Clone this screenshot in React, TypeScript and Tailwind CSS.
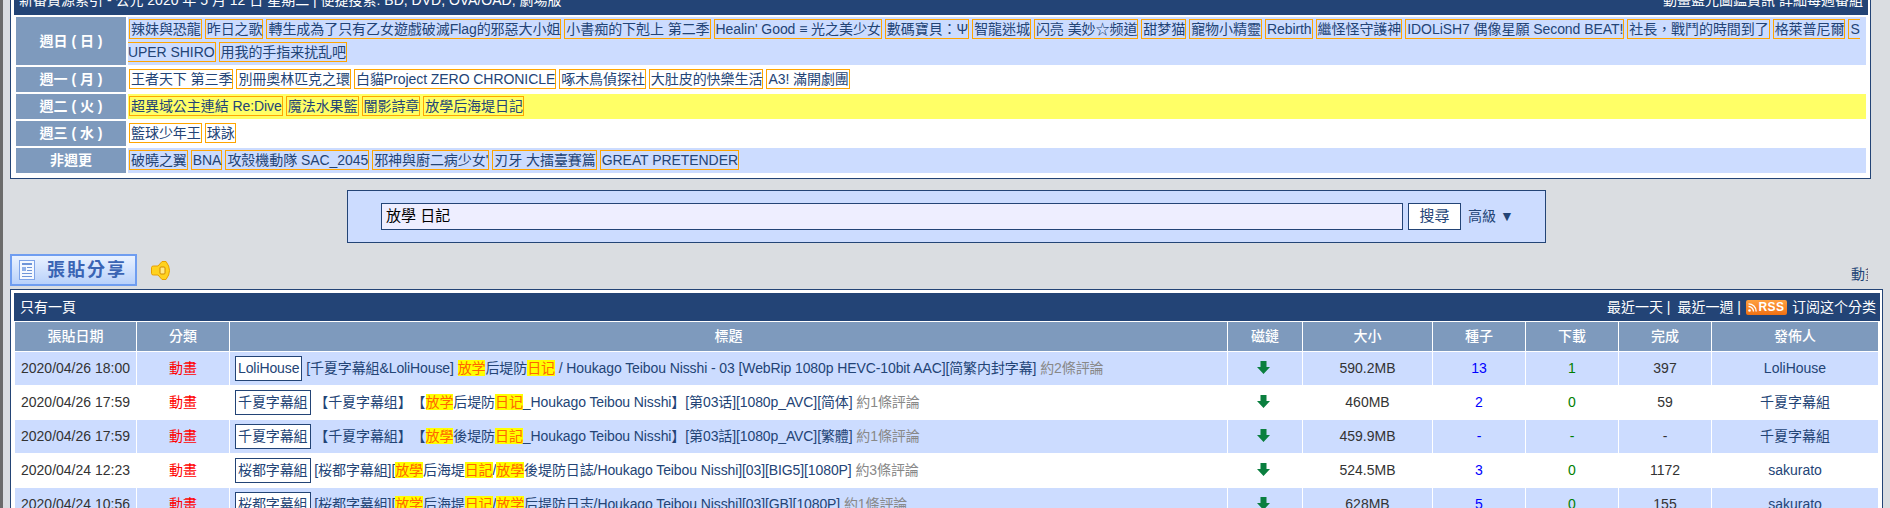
import { Fragment } from "react"

const schedule = [
  {
    day: "週日 ( 日 )",
    bg: "bg-[#ccdcff]",
    tags: ["辣妹與恐龍", "昨日之歌", "轉生成為了只有乙女遊戲破滅Flag的邪惡大小姐", "小書痴的下剋上 第二季", "Healin' Good ≡ 光之美少女", "數碼寶貝：Ψ", "智龍迷城", "闪亮 美妙☆频道", "甜梦猫", "寵物小精靈", "Rebirth", "繼怪怪守護神", "IDOLiSH7 偶像星願 Second BEAT!", "社長，戰鬥的時間到了", "格萊普尼爾", "SUPER SHIRO", "用我的手指来扰乱吧"],
  },
  {
    day: "週一 ( 月 )",
    bg: "bg-white",
    tags: ["王者天下 第三季", "別冊奧林匹克之環", "白貓Project ZERO CHRONICLE", "啄木鳥偵探社", "大肚皮的快樂生活", "A3! 滿開劇團"],
  },
  {
    day: "週二 ( 火 )",
    bg: "bg-[#ffff66]",
    tags: ["超異域公主連結 Re:Dive", "魔法水果籃", "闇影詩章", "放學后海堤日記"],
  },
  {
    day: "週三 ( 水 )",
    bg: "bg-white",
    tags: ["籃球少年王", "球詠"],
  },
  {
    day: "非週更",
    bg: "bg-[#ccdcff]",
    tags: ["破曉之翼", "BNA", "攻殼機動隊 SAC_2045", "邪神與廚二病少女'", "刃牙 大擂臺賽篇", "GREAT PRETENDER"],
  },
]

// *...* marks the highlighted search words
const posts = [
  { date: "2020/04/26 18:00", team: "LoliHouse", title: "[千夏字幕組&LoliHouse] *放学*后堤防*日记* / Houkago Teibou Nisshi - 03 [WebRip 1080p HEVC-10bit AAC][简繁内封字幕]", comments: "約2條評論", size: "590.2MB", seed: "13", dl: "1", done: "397", by: "LoliHouse" },
  { date: "2020/04/26 17:59", team: "千夏字幕組", title: "【千夏字幕组】【*放学*后堤防*日记*_Houkago Teibou Nisshi】[第03话][1080p_AVC][简体]", comments: "約1條評論", size: "460MB", seed: "2", dl: "0", done: "59", by: "千夏字幕組" },
  { date: "2020/04/26 17:59", team: "千夏字幕組", title: "【千夏字幕組】【*放學*後堤防*日記*_Houkago Teibou Nisshi】[第03話][1080p_AVC][繁體]", comments: "約1條評論", size: "459.9MB", seed: "-", dl: "-", done: "-", by: "千夏字幕組" },
  { date: "2020/04/24 12:23", team: "桜都字幕組", title: "[桜都字幕組][*放學*后海堤*日記*/*放學*後堤防日誌/Houkago Teibou Nisshi][03][BIG5][1080P]", comments: "約3條評論", size: "524.5MB", seed: "3", dl: "0", done: "1172", by: "sakurato" },
  { date: "2020/04/24 10:56", team: "桜都字幕組", title: "[桜都字幕組][*放学*后海堤*日记*/*放学*后堤防日志/Houkago Teibou Nisshi][03][GB][1080P]", comments: "約1條評論", size: "628MB", seed: "5", dl: "0", done: "155", by: "sakurato" },
]

const columns = [
  { label: "張貼日期", width: "w-[121px]" },
  { label: "分類", width: "w-[92px]" },
  { label: "標題", width: "w-[997px]" },
  { label: "磁鏈", width: "w-[74px]" },
  { label: "大小", width: "w-[129px]" },
  { label: "種子", width: "w-[92px]" },
  { label: "下載", width: "w-[92px]" },
  { label: "完成", width: "w-[92px]" },
  { label: "發佈人", width: "w-[166px]" },
]

function Title({ text }: { text: string }) {
  return (
    <>
      {text.split("*").map((part, i) =>
        i % 2 === 1 ? (
          <span key={i} className="bg-[#ffff00] text-[#ff6600]">{part}</span>
        ) : (
          <Fragment key={i}>{part}</Fragment>
        )
      )}
    </>
  )
}

function PostIcon() {
  return (
    <svg width="17" height="21" viewBox="0 0 17 21" className="shrink-0">
      <rect x="0.5" y="0.5" width="15" height="19" fill="#f4f8ff" stroke="#7ea4e8" />
      <rect x="3" y="3" width="10" height="2" fill="#6f95d8" />
      <rect x="3" y="7" width="4" height="4" fill="#8fb0e8" />
      <rect x="8" y="7" width="5" height="1" fill="#6f95d8" />
      <rect x="8" y="10" width="5" height="1" fill="#6f95d8" />
      <rect x="3" y="13" width="10" height="1" fill="#6f95d8" />
      <rect x="3" y="16" width="10" height="1" fill="#6f95d8" />
    </svg>
  )
}

function SpeakerIcon() {
  return (
    <svg width="19" height="19" viewBox="0 0 19 19">
      <path d="M0.5 6.5 Q0.5 5 2.5 5 L7 5 L11 0.5 L15 0.5 Q18.5 5 18.5 9.5 Q18.5 14 15 18.5 L11 18.5 L7 14 L2.5 14 Q0.5 14 0.5 12.5 Z" fill="#ffd21f" stroke="#e8a000" />
      <rect x="9" y="6" width="5" height="7" rx="1" fill="#ffe98a" stroke="#d08a00" />
    </svg>
  )
}

function ArrowIcon() {
  return (
    <svg width="13" height="13" viewBox="0 0 13 13" className="block">
      <path d="M3.5 0 H9.5 V6 H13 L6.5 13 L0 6 H3.5 Z" fill="#0a7f3f" />
    </svg>
  )
}

export default function App() {
  return (
    <div className="h-[508px] w-[1890px] overflow-hidden border-l-[3px] border-[#6b6b6b] bg-[#dadde1] font-['Liberation_Sans','Noto_Sans_CJK_TC',sans-serif] text-[14px] text-[#234476]">
      {/* Weekly schedule */}
      <div className="ml-[7px] h-[179px] w-[1861px] border-x border-b border-[#234476] bg-white pb-[3px] pl-[3px] pr-[2px]">
        <div className="flex h-[15px] items-end justify-between overflow-hidden bg-[#234476] px-[5px] pb-[5px] leading-[20px] text-white">
          <span>新番資源索引 - 公元 2020 年 5 月 12 日 星期二 | 便捷搜索: BD, DVD, OVA/OAD, 劇場版</span>
          <span>動畫藍光圖鑑資訊 詳細每週番組</span>
        </div>
        <table className="w-[1854px] table-fixed border-separate border-spacing-[2px]">
          <tbody>
            {schedule.map((row) => (
              <tr key={row.day}>
                <th className="w-[110px] bg-[#7e9abd] text-center font-bold text-white">{row.day}</th>
                <td className={`${row.bg} break-all py-px leading-[23px] tracking-[-0.06px]`}>
                  {row.tags.map((tag) => (
                    <span key={tag} className="ml-px mr-[2px] border border-[#ffa500] pl-px py-px">
                      {tag}
                    </span>
                  ))}
                </td>
              </tr>
            ))}
          </tbody>
        </table>
      </div>

      {/* Search */}
      <div className="mx-auto mt-[11px] flex h-[53px] w-[1199px] items-center border border-[#234476] bg-[#ccdcff] pl-[33px]">
        <div className="flex h-[27px] w-[1022px] items-center border border-[#234476] bg-[#eeeeff] px-[4px] text-[15px] text-black">放學 日記</div>
        <button className="ml-[5px] h-[27px] w-[53px] border border-[#234476] bg-white text-[15px] text-[#234476]">搜尋</button>
        <span className="ml-[7px]">高級 ▼</span>
      </div>

      {/* Post button row */}
      <div className="mt-[11px] flex h-[32px] items-center pl-[7px]">
        <div className="flex h-[32px] w-[127px] items-center gap-[11px] border-2 border-[#6f9df0] bg-gradient-to-b from-[#eaf2ff] to-[#b9d1fa] pl-[7px] text-[18px] font-bold tracking-[2px] text-[#3a64b4]">
          <PostIcon />
          <span>張貼分享</span>
        </div>
        <div className="ml-[14px]"><SpeakerIcon /></div>
        <div className="ml-auto mr-[22px] mt-[8px] w-[17px] overflow-hidden whitespace-nowrap">動畫</div>
      </div>

      {/* Torrent list */}
      <div className="ml-[7px] mt-[3px] w-[1873px] border border-[#234476] bg-white pl-[3px] pr-[2px] pt-[3px]">
        <div className="flex h-[28px] items-center justify-between bg-[#234476] pl-[6px] pr-[4px] text-white">
          <span>只有一頁</span>
          <div className="flex items-center">
            <span>最近一天 |</span>
            <span className="ml-[7px]">最近一週 |</span>
            <span className="ml-[5px] mr-[5px] flex h-[15px] w-[41px] items-center justify-center gap-px rounded-[2px] bg-gradient-to-b from-[#ffa040] to-[#f07010] text-[12px] font-bold leading-none tracking-[0.5px] text-white">
              <svg width="9" height="9" viewBox="0 0 9 9">
                <circle cx="1.5" cy="7.5" r="1.3" fill="#fff" />
                <path d="M0.5 3.5 A5 5 0 0 1 5.5 8.5 M0.5 0.8 A7.7 7.7 0 0 1 8.2 8.5" fill="none" stroke="#fff" strokeWidth="1.3" />
              </svg>
              RSS
            </span>
            <span>订阅这个分类</span>
          </div>
        </div>
        <table className="w-[1865px] table-fixed border-separate border-spacing-[1px]">
          <thead>
            <tr>
              {columns.map((col) => (
                <th key={col.label} className={`${col.width} h-[29px] bg-[#7e9abd] text-center font-medium text-white`}>{col.label}</th>
              ))}
            </tr>
          </thead>
          <tbody>
            {posts.map((post, i) => {
              const rowBg = i % 2 === 0 ? "bg-[#ccdcff]" : "bg-white"
              return (
                <tr key={i} className={rowBg}>
                  <td className="h-[33px] text-center text-[#333333]">{post.date}</td>
                  <td className="text-center text-[#ff0000]">動畫</td>
                  <td className="whitespace-nowrap pl-[5px] tracking-[-0.1px] [text-spacing-trim:space-all]">
                    <span className="inline-block border border-[#234476] bg-white px-[2px] py-[1px]">{post.team}</span>{" "}
                    <Title text={post.title} /> <span className="text-[#888888]">{post.comments}</span>
                  </td>
                  <td className="pl-[29px] pt-[9px] align-top"><ArrowIcon /></td>
                  <td className="text-center text-[#333333]">{post.size}</td>
                  <td className="text-center text-[#0000ff]">{post.seed}</td>
                  <td className="text-center text-[#008000]">{post.dl}</td>
                  <td className="text-center text-[#333333]">{post.done}</td>
                  <td className="text-center">{post.by}</td>
                </tr>
              )
            })}
          </tbody>
        </table>
      </div>
    </div>
  )
}
